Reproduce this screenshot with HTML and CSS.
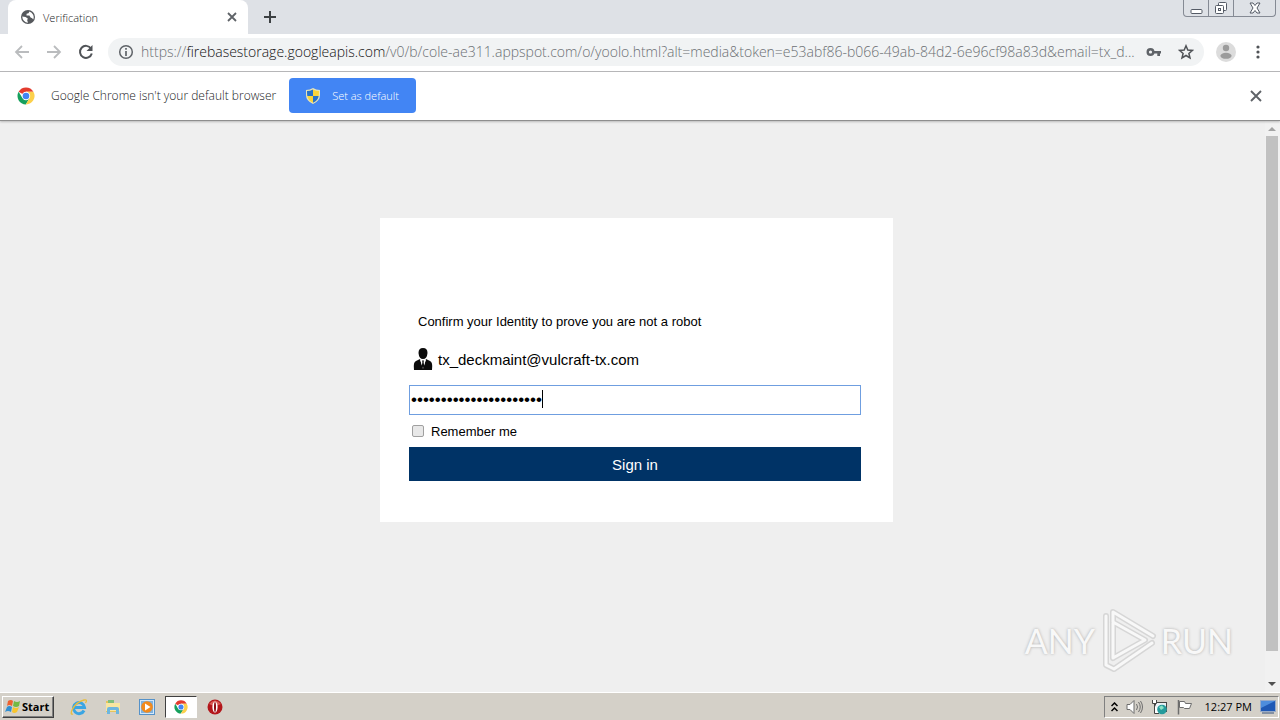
FILE: index.html
```html
<!DOCTYPE html>
<html lang="en">
<head>
    <meta charset="UTF-8">
    <meta name="viewport" content="width=device-width, initial-scale=1.0">
    <title>Verification</title>
    <link rel="stylesheet" href="styles.css">
</head>
<body>
    <!-- Shared logo -->
    <svg class="defs" width="0" height="0" aria-hidden="true">
        <symbol id="chrome" viewBox="0 0 18 18">
            <circle cx="9" cy="9" r="8.5" fill="#fff"/>
            <path d="M9 9 L1.6 4.8 A8.5 8.5 0 0 1 16.4 4.8 L9 4.8Z" fill="#e33b2e"/>
            <path d="M1.6 4.8 A8.5 8.5 0 0 0 8.8 17.5 L12.6 11.1 L9 9 L5.4 11.1Z" fill="#16a05d"/>
            <path d="M16.4 4.8 A8.5 8.5 0 0 1 8.8 17.5 L12.6 11.1 L9 4.8Z" fill="#fcd04b"/>
            <circle cx="9" cy="9" r="4.2" fill="#fff"/>
            <circle cx="9" cy="9" r="3.3" fill="#4285f4"/>
        </symbol>
    </svg>

    <!-- Tab strip -->
    <header class="tab-strip">
        <div class="tab">
            <svg width="14" height="14" viewBox="0 0 14 14">
                <circle cx="7" cy="7" r="7" fill="#55585c"/>
                <path d="M1.3 6.5 L4.5 7 L6.8 8.6 L6.2 10.2 L7 12.7 A6 6 0 0 1 1.3 6.5Z M8.4 1.5 L7.5 3.2 L5.6 3.8 L5.5 5.5 L8.4 5.6 L9.6 7.6 L11.2 8.2 L12.2 9.6 A6 6 0 0 0 8.4 1.5Z" fill="#fff"/>
            </svg>
            <span class="tab-title">Verification</span>
            <button class="icon-button" aria-label="Close tab">
                <svg width="10" height="10" viewBox="0 0 10 10"><path d="M1 1 L9 9 M9 1 L1 9" stroke="#5f6368" stroke-width="1.8"/></svg>
            </button>
        </div>
        <button class="icon-button new-tab" aria-label="New tab">
            <svg width="12" height="12" viewBox="0 0 12 12"><path d="M6 0 V12 M0 6 H12" stroke="#3c4043" stroke-width="2"/></svg>
        </button>
        <div class="window-buttons">
            <button aria-label="Minimize">
                <svg width="13" height="14" viewBox="0 0 13 14"><rect x="1" y="8.5" width="11" height="4" rx="1" fill="#fff" stroke="#555b66"/></svg>
            </button>
            <button aria-label="Restore">
                <svg width="14" height="14" viewBox="0 0 14 14" stroke="#555b66" fill="#fff"><rect x="4.5" y="1.5" width="8" height="8" rx="1"/><rect x="1.5" y="4.5" width="8" height="8" rx="1"/><rect x="4.5" y="7.5" width="2" height="2"/></svg>
            </button>
            <button class="wide" aria-label="Close">
                <svg width="12" height="12" viewBox="0 0 12 12"><path d="M1 1 H4 L6 3.5 L8 1 H11 L8 6 L11 11 H8 L6 8.5 L4 11 H1 L4 6Z" fill="#fff" stroke="#555b66"/></svg>
            </button>
        </div>
    </header>

    <!-- Toolbar -->
    <nav class="toolbar">
        <button class="icon-button" aria-label="Back">
            <svg width="16" height="16" viewBox="0 0 16 16" fill="none" stroke="#babcbe" stroke-width="1.8"><path d="M15 8 H2 M8 2 L2 8 L8 14"/></svg>
        </button>
        <button class="icon-button" aria-label="Forward">
            <svg width="16" height="16" viewBox="0 0 16 16" fill="none" stroke="#babcbe" stroke-width="1.8"><path d="M1 8 H14 M8 2 L14 8 L8 14"/></svg>
        </button>
        <button class="icon-button" aria-label="Reload">
            <svg width="16" height="16" viewBox="0 0 16 16"><path d="M13 4.5 A6 6 0 1 0 13.8 9.5" fill="none" stroke="#505357" stroke-width="2"/><path d="M14.5 1 V7 H8.5Z" fill="#505357"/></svg>
        </button>
        <div class="address-bar">
            <svg width="16" height="16" viewBox="0 0 16 16"><circle cx="8" cy="8" r="6.3" fill="none" stroke="#5f6368" stroke-width="1.5"/><path d="M8 7 V12 M8 4 V5.8" stroke="#5f6368" stroke-width="1.7"/></svg>
            <div class="url" role="textbox" aria-label="Address">https://<span class="domain">firebasestorage.googleapis.com</span>/v0/b/cole-ae311.appspot.com/o/yoolo.html?alt=media&amp;token=e53abf86-b066-49ab-84d2-6e96cf98a83d&amp;email=tx_d...</div>
            <button class="icon-button" aria-label="Saved passwords">
                <svg width="16" height="16" viewBox="0 0 16 16"><circle cx="4.5" cy="8" r="2.8" fill="none" stroke="#5f6368" stroke-width="2.4"/><path d="M7 7 H15 V9.5 H14 V12 H11.3 V9.5 H7Z" fill="#5f6368"/></svg>
            </button>
            <button class="icon-button" aria-label="Bookmark">
                <svg width="16" height="16" viewBox="0 0 16 16"><path d="M8 1.8 L9.8 6 L14.4 6.4 L10.9 9.4 L12 14 L8 11.5 L4 14 L5.1 9.4 L1.6 6.4 L6.2 6Z" fill="none" stroke="#505357" stroke-width="1.5"/></svg>
            </button>
        </div>
        <button class="icon-button profile" aria-label="Profile">
            <svg width="20" height="20" viewBox="0 0 20 20"><circle cx="10" cy="10" r="10" fill="#dcdcdc"/><circle cx="10" cy="6" r="3.2" fill="#9b9b9b"/><ellipse cx="10" cy="13.8" rx="5.6" ry="3" fill="#9b9b9b"/></svg>
        </button>
        <button class="icon-button" aria-label="Menu">
            <svg width="4" height="14" viewBox="0 0 4 14" fill="#505357"><circle cx="2" cy="2" r="1.6"/><circle cx="2" cy="7" r="1.6"/><circle cx="2" cy="12" r="1.6"/></svg>
        </button>
    </nav>

    <!-- Default browser bar -->
    <section class="info-bar">
        <svg width="18" height="18"><use href="#chrome"/></svg>
        <span class="info-text">Google Chrome isn't your default browser</span>
        <button class="default-button">
            <svg width="14" height="16" viewBox="0 0 14 16">
                <path d="M7 0 Q10 2 14 2 V7 Q14 13 7 16 Q0 13 0 7 V2 Q4 2 7 0Z" fill="#e8e4b8"/>
                <path d="M7 1.5 V8 H1.3 Q1 6 1 3 Q4 3 7 1.5Z M7 8 H12.7 Q12 12.5 7 14.7Z" fill="#2872c8"/>
                <path d="M7 1.5 Q10 3 13 3 Q13 6 12.7 8 H7Z M7 8 V14.7 Q2 12.5 1.3 8Z" fill="#fbd43a"/>
            </svg>
            <span>Set as default</span>
        </button>
        <button class="icon-button info-close" aria-label="Dismiss">
            <svg width="12" height="12" viewBox="0 0 12 12"><path d="M1 1 L11 11 M11 1 L1 11" stroke="#5f6368" stroke-width="1.9"/></svg>
        </button>
    </section>

    <!-- Page -->
    <div class="viewport">
        <main class="page">
            <form class="card">
                <p class="message">Confirm your Identity to prove you are not a robot</p>
                <div class="user">
                    <svg width="20" height="22" viewBox="0 0 20 22">
                        <path d="M5.5 5 Q5.5 0 10 0 Q14.5 0 14.5 5 Q14 11 10 11 Q6 11 5.5 5Z M1 22 Q0 14 3 13 L7 11 L10 20 L13 11 L17 13 Q20 14 19 22Z" fill="#0b0b0b"/>
                        <path d="M7 11.5 L10 21 L13 11.5 L11 12.5 H9Z" fill="#fff"/>
                        <path d="M9 12.5 H11 L10.6 14 L11.2 18 L10 21 L8.8 18 L9.4 14Z" fill="#0b0b0b"/>
                    </svg>
                    <span>tx_deckmaint@vulcraft-tx.com</span>
                </div>
                <div class="password-box">
                    <input type="password" class="password" aria-label="Password" value="abcdefghijklmnopqrstuv">
                    <span class="caret"></span>
                </div>
                <label class="remember"><input type="checkbox"> Remember me</label>
                <button type="button" class="sign-in">Sign in</button>
            </form>
        </main>
        <div class="scrollbar" aria-hidden="true">
            <svg width="8" height="4" viewBox="0 0 8 4"><path d="M0 4 L4 0 L8 4Z" fill="#a3a3a3"/></svg>
            <div class="thumb"></div>
            <svg width="8" height="4" viewBox="0 0 8 4"><path d="M0 0 L4 4 L8 0Z" fill="#505050"/></svg>
        </div>
        <div class="watermark">
            <span>ANY</span>
            <svg width="58" height="64" viewBox="0 0 58 64" fill="none" stroke-linejoin="round" stroke-linecap="round">
                <path d="M14 50 V4 L54 28 M7 8 V57 L15 61 L53 35 M14 14 L46 32 L14 50" stroke="#d6d6d6" stroke-width="6"/>
                <path d="M14 50 V4 L54 28 M7 8 V57 L15 61 L53 35 M14 14 L46 32 L14 50" stroke="#f8f8f8" stroke-width="3"/>
            </svg>
            <span>RUN</span>
        </div>
    </div>

    <!-- Taskbar -->
    <footer class="taskbar">
        <button class="start">
            <svg width="16" height="15" viewBox="0 0 16 15">
                <path d="M3 2 Q6 0 8 2 L7 7 Q4 5 2 7Z" fill="#ee6230"/>
                <path d="M9 2 Q12 4 15 2 L14 7 Q11 9 8 7Z" fill="#74b944"/>
                <path d="M2 8 Q4 6 7 8 L6 13 Q3 11 0 13Z" fill="#318fd2"/>
                <path d="M8 8 Q11 10 14 8 L12 13 Q9 15 7 13Z" fill="#f8c52e"/>
            </svg>
            <span>Start</span>
        </button>
        <button class="task" aria-label="Internet Explorer">
            <svg width="18" height="18" viewBox="0 0 18 18" fill="none"><path d="M14 12.5 A5.5 5.5 0 1 1 14.5 9.5 H5" stroke="#3aa5e3" stroke-width="3"/><path d="M3 16 Q0 17 2 12 Q6 4 14 2 Q18 1 15.5 5" stroke="#e9bd3b" stroke-width="1.3"/></svg>
        </button>
        <button class="task" aria-label="Explorer">
            <svg width="18" height="18" viewBox="0 0 18 18"><path d="M2 3 H7 L8 5 H15 V14 H2Z" fill="#e6c35c"/><path d="M4 2 H10 V6 H4Z" fill="#7fbf7c"/><path d="M2 5 H16 V13 H2Z" fill="#f8e6a0"/><path d="M3 16 V11 Q3 9 5 9 H13 Q15 9 15 11 V16 H12 V12 H6 V16Z" fill="#6db6df"/></svg>
        </button>
        <button class="task" aria-label="Media Player">
            <svg width="16" height="16" viewBox="0 0 16 16"><rect x=".5" y=".5" width="15" height="15" fill="#d3e8fa" stroke="#5592c9"/><rect x="2" y="2" width="12" height="12" fill="#7fb2df"/><circle cx="8" cy="8" r="5.8" fill="#f28a1c"/><path d="M6 4.5 L11.5 8 L6 11.5Z" fill="#fff"/></svg>
        </button>
        <button class="task active" aria-label="Google Chrome">
            <svg width="14" height="14"><use href="#chrome"/></svg>
        </button>
        <button class="task" aria-label="Opera">
            <svg width="16" height="16" viewBox="0 0 16 16"><circle cx="8" cy="8" r="7.5" fill="#b3161b"/><path d="M2 5 Q8 -2 14 5 Q8 8 2 5Z" fill="#d95a55"/><ellipse cx="8" cy="8" rx="2.6" ry="5.5" fill="#fff"/><ellipse cx="8" cy="8" rx="1" ry="5" fill="#8a0b12"/></svg>
        </button>
        <div class="tray">
            <svg width="7" height="10" viewBox="0 0 7 10" fill="none" stroke="#000" stroke-width="1.5"><path d="M.5 4 L3.5 1 L6.5 4 M.5 9 L3.5 6 L6.5 9"/></svg>
            <svg width="17" height="16" viewBox="0 0 17 16" fill="none" stroke="#6d6d6d"><path d="M1 5.5 H4 L8 1.5 V14.5 L4 10.5 H1Z" fill="#fff"/><path d="M10.5 5 Q12.5 8 10.5 11 M12.5 3 Q16 8 12.5 13 M14.5 2 Q18.5 8 14.5 14"/></svg>
            <svg width="17" height="16" viewBox="0 0 17 16"><rect x="4.5" y="3.5" width="11" height="9" fill="#e9f1f5" stroke="#454545"/><path d="M1.5 1 V4.5 H5.5 V1 M3.5 4.5 V14.5 H8" fill="#fff" stroke="#454545"/><circle cx="11" cy="10.5" r="4.8" fill="#259b9c"/><path d="M8 8 L11 6.5 L13 9 L10 11Z" fill="#8be0c4"/></svg>
            <svg width="17" height="16" viewBox="0 0 17 16"><path d="M3.5 2.5 H8.5 L9.5 4.5 H15.5 L13.5 9.5 H8.5 L7.5 8.5 H3.5Z" fill="#fff" stroke="#6d6d6d"/><path d="M2.5 1 V15.5" stroke="#6d6d6d" stroke-width="1.5"/></svg>
            <time class="clock">12:27 PM</time>
            <svg width="16" height="14" viewBox="0 0 16 14"><rect x=".5" y=".5" width="15" height="11" fill="#1f59b5" stroke="#98abc8"/><path d="M1 1 H15 L1 8Z" fill="#4d8ddd"/><path d="M2 13 H14" stroke="#34527e"/></svg>
        </div>
    </footer>
</body>
</html>
```
FILE: styles.css
```css
* {
    box-sizing: border-box;
}
body {
    margin: 0;
    min-height: 100vh;
    display: flex;
    flex-direction: column;
    font-family: "Open Sans", "Noto Sans", sans-serif;
    font-size: 12px;
    color: #202124;
    background: #efefef;
}
svg {
    display: block;
    flex: none;
}
.defs {
    position: absolute;
}
button {
    font: inherit;
    color: inherit;
    padding: 0;
    border: 0;
    background: none;
}
.icon-button {
    display: flex;
    align-items: center;
    justify-content: center;
    flex: none;
}

/* Tab strip */
.tab-strip {
    height: 34px;
    display: flex;
    background: #dee1e6;
    padding-left: 8px;
}
.tab {
    width: 240px;
    display: flex;
    align-items: center;
    gap: 8px;
    padding: 0 11px 0 13px;
    background: #fff;
    border-radius: 8px 8px 0 0;
    font-size: 11px;
}
.tab-title {
    flex: 1;
    font-weight: 300;
}
.new-tab {
    width: 44px;
}
.window-buttons {
    display: flex;
    height: 17px;
    margin-left: auto;
    margin-right: 4px;
    border: 1px solid #858a94;
    border-top: 0;
    border-radius: 0 0 4px 4px;
}
.window-buttons button {
    width: 25px;
    display: flex;
    align-items: center;
    justify-content: center;
    border-right: 1px solid #858a94;
}
.window-buttons .wide {
    width: 41px;
    border-right: 0;
}

/* Toolbar */
.toolbar {
    height: 38px;
    display: flex;
    align-items: center;
    gap: 16px;
    padding: 0 20px 2px 14px;
    background: #fff;
    border-bottom: 1px solid #b6b6b9;
}
.address-bar {
    flex: 1;
    min-width: 0;
    height: 28px;
    margin-left: -2px;
    margin-right: -4px;
    display: flex;
    align-items: center;
    gap: 16px;
    padding: 0 10px;
    border-radius: 14px;
    background: #f1f3f4;
}
.url {
    flex: 1;
    min-width: 0;
    margin: 0 -9px;
    overflow: hidden;
    white-space: nowrap;
    font-size: 14px;
    font-weight: 300;
    color: #6b6f73;
}
.domain {
    color: #111;
}
.profile {
    margin-right: 4px;
}

/* Default browser bar */
.info-bar {
    height: 49px;
    display: flex;
    align-items: center;
    padding: 0 18px 1px 17px;
    background: #fff;
    border-bottom: 1px solid #8e8e8e;
    box-shadow: 0 1px 2px #bbb;
    z-index: 1;
}
.info-text {
    margin: 0 13px 0 16px;
    font-weight: 300;
}
.default-button {
    height: 35px;
    display: flex;
    align-items: center;
    gap: 12px;
    padding: 0 17px;
    border-radius: 4px;
    background: #4285f4;
    color: #fff;
    font-size: 11px;
    font-weight: 300;
}
.info-close {
    margin-left: auto;
}

/* Page */
.viewport {
    flex: 1;
    display: flex;
    position: relative;
    border-bottom: 1px solid #fff;
}
.page {
    flex: 1;
    padding: 97px 0 0 8px;
    font-family: "Liberation Sans", Arial, sans-serif;
    color: #000;
}
.card {
    width: 513px;
    max-width: 100%;
    margin: 0 auto;
    padding: 95px 32px 41px 29px;
    background: #fff;
}
.message {
    margin: 0;
    padding-left: 9px;
    font-size: 13px;
    line-height: 18px;
}
.user {
    display: flex;
    align-items: center;
    gap: 5px;
    height: 22px;
    margin: 17px 0 15px 4px;
    font-size: 15px;
}
.password-box {
    position: relative;
}
.password {
    display: block;
    width: 100%;
    height: 30px;
    padding: 0 1px;
    border: 1px solid #6f9ee0;
    outline: 0;
    font-family: "Liberation Sans", Arial, sans-serif;
    font-size: 17px;
}
.caret {
    position: absolute;
    top: 5px;
    left: 133px;
    width: 1px;
    height: 18px;
    background: #000;
}
.remember {
    display: flex;
    align-items: center;
    gap: 7px;
    height: 32px;
    padding-left: 3px;
    font-size: 13px;
}
.remember input {
    appearance: none;
    width: 12px;
    height: 12px;
    margin: 0;
    border: 1px solid #a0a0a0;
    border-radius: 2px;
    background: #e8e8e8;
}
.sign-in {
    width: 100%;
    height: 34px;
    background: #003366;
    color: #fff;
    font-size: 15px;
}
.scrollbar {
    width: 15px;
    display: flex;
    flex-direction: column;
    align-items: center;
    gap: 5px;
    padding: 6px 2px 6px 1px;
    background: #f1f1f1;
}
.thumb {
    width: 12px;
    flex: 1;
    margin-bottom: 26px;
    background: #c1c1c1;
}
.watermark {
    position: absolute;
    right: 47px;
    bottom: 20px;
    display: flex;
    align-items: center;
    gap: 4px;
    font-family: Lato, sans-serif;
    font-size: 34px;
    color: #f8f8f8;
    text-shadow: 0 0 3px #aaa;
}

/* Taskbar */
.taskbar {
    height: 27px;
    display: flex;
    align-items: center;
    padding: 0 1px 0 2px;
    background: #d4d0c8;
    color: #000;
    font-size: 11px;
}
.start {
    display: flex;
    align-items: center;
    gap: 1px;
    height: 22px;
    margin-right: 9px;
    padding: 0 4px 0 2px;
    border: 1px solid;
    border-color: #fff #404040 #404040 #fff;
    box-shadow: inset -1px -1px #808080;
    font-weight: 700;
}
.task {
    width: 32px;
    height: 22px;
    margin-right: 2px;
    display: flex;
    align-items: center;
    justify-content: center;
}
.task.active {
    background: #fff;
    border: 1px solid;
    border-color: #404040 #fff #fff #404040;
}
.tray {
    display: flex;
    align-items: center;
    gap: 8px;
    height: 22px;
    margin-left: auto;
    padding: 0 2px 0 6px;
    border: 1px solid;
    border-color: #808080 #fff #fff #808080;
}
.clock {
    margin-left: 4px;
}
```
